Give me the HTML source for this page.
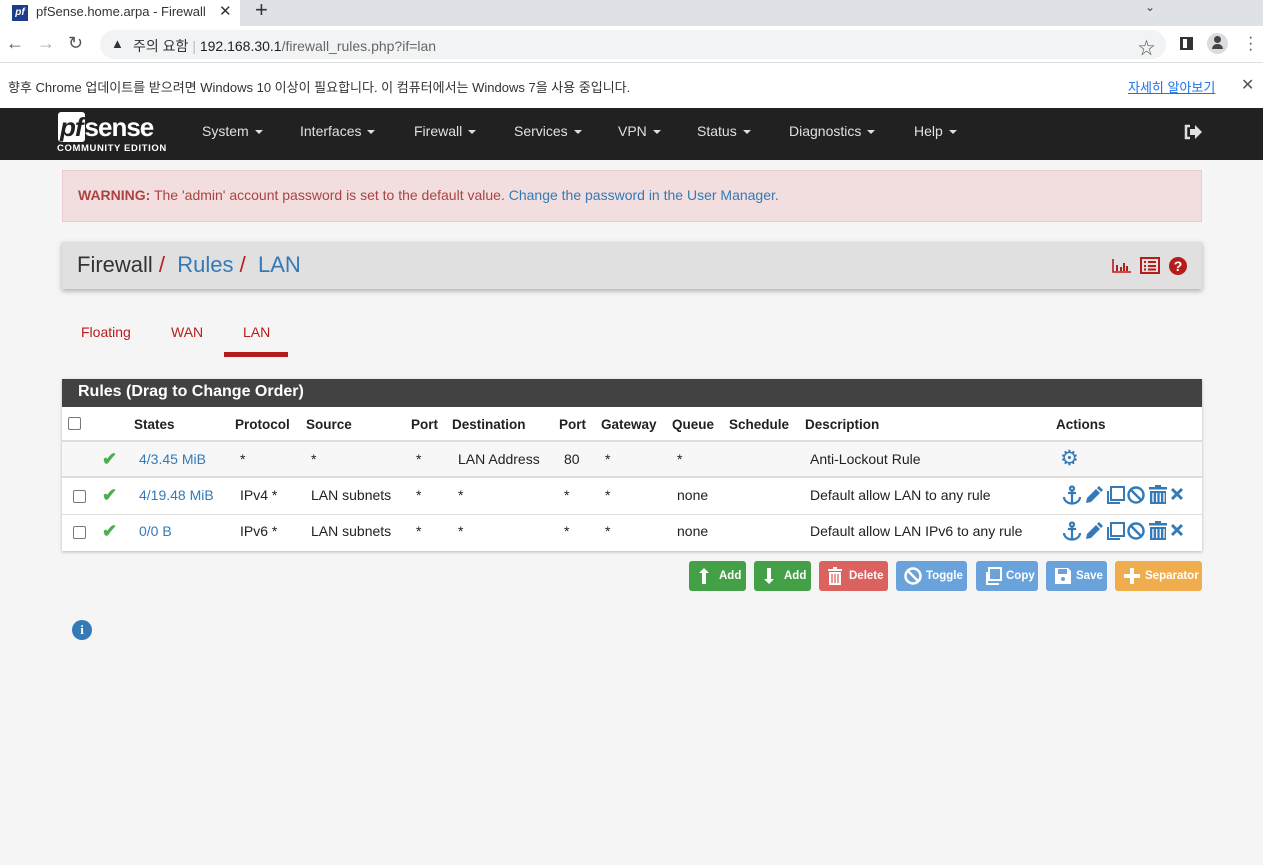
<!DOCTYPE html>
<html><head><meta charset="utf-8">
<style>
*{box-sizing:border-box;margin:0;padding:0}
body{width:1263px;height:865px;overflow:hidden;background:#f5f5f5;font-family:"Liberation Sans","Noto Sans CJK KR",sans-serif;position:relative;color:#212121}
.a{position:absolute}
.tabbar{left:0;top:0;width:1263px;height:26px;background:#dee1e6}
.tab{left:0;top:0;width:240px;height:26px;background:#fff;font-size:13px;color:#333}
.addr{left:0;top:26px;width:1263px;height:37px;background:#fff;border-bottom:1px solid #ddd}
.omni{left:100px;top:30px;width:1066px;height:29px;background:#f1f3f4;border-radius:15px}
.info{left:0;top:63px;width:1263px;height:45px;background:#fff;font-size:13px;color:#333}
.nav{left:0;top:108px;width:1263px;height:52px;background:#212121;color:#e0e0e0;font-size:14px}
.nav span.m{position:absolute;top:15px}
.car{display:inline-block;border-left:4px solid transparent;border-right:4px solid transparent;border-top:4px solid #e0e0e0;vertical-align:middle;margin-left:6px}
.warn{left:62px;top:170px;width:1140px;height:52px;background:#f2dede;border:1px solid #ebccd1;color:#a94442;font-size:14px;padding:16px 15px}
.crumb{left:62px;top:242px;width:1140px;height:47px;background:#e0e0e0;box-shadow:0 2px 5px rgba(0,0,0,.3);font-size:22px;padding:10px 15px;color:#333}
.blue{color:#337ab7}.red{color:#b71c1c}
.tabs{top:324px;font-size:14px;color:#b71c1c}
.panel{left:62px;top:379px;width:1140px;height:172px;background:#fff;box-shadow:0 1px 3px rgba(0,0,0,.25)}
.ph{left:0;top:0;width:1140px;height:28px;background:#424242;color:#fff;font-weight:bold;font-size:16px;padding:4px 16px}
.row{left:0;width:1140px;font-size:14px}
.row span{position:absolute}
.cb{position:absolute;width:13px;height:13px;border:1px solid #777;border-radius:2px;background:#fff}
.btn{position:absolute;top:561px;height:30px;border-radius:3px;color:#fff;font-size:11.5px;font-weight:bold;line-height:30px}
.btn svg{position:absolute;left:8px;top:6px}
.btn b{position:absolute;left:30px;top:0}
</style></head><body>
<div class="a tabbar"></div>
<div class="a tab"><div class="a" style="left:12px;top:5px;width:16px;height:16px;background:#1e3c8c;color:#fff;font-size:10px;font-weight:bold;font-style:italic;text-align:center;line-height:16px">pf</div><div class="a" style="left:36px;top:4px;white-space:nowrap;width:170px;overflow:hidden">pfSense.home.arpa - Firewall: Ru</div><div class="a" style="left:219px;top:2px;font-size:15px">✕</div></div>
<div class="a" style="left:255px;top:-3px;font-size:22px;color:#333">+</div>
<div class="a" style="left:1145px;top:0px;font-size:12px;color:#444">⌄</div>
<div class="a addr"></div>
<div class="a" style="left:6px;top:33px;font-size:18px;color:#555">←</div>
<div class="a" style="left:37px;top:33px;font-size:18px;color:#aaa">→</div>
<div class="a" style="left:68px;top:33px;font-size:18px;color:#555">↻</div>
<div class="a omni"></div>
<div class="a" style="left:111px;top:36px;font-size:13px;color:#333">▲</div>
<div class="a" style="left:133px;top:36px;font-size:14px;color:#333">주의 요함 <span style="color:#bbb">|</span> <span style="color:#202124">192.168.30.1</span><span style="color:#666">/firewall_rules.php?if=lan</span></div>
<div class="a" style="left:1138px;top:34px;font-size:17px;color:#555">☆</div>
<div class="a" style="left:1180px;top:37px;width:13px;height:13px;border:2px solid #333;border-left-width:3px;border-right-width:6px"></div>
<div class="a" style="left:1207px;top:33px;width:21px;height:21px;border-radius:50%;background:#dadce0"></div>
<div class="a" style="left:1212px;top:36px;width:11px;height:14px;"><div style="width:7px;height:7px;border-radius:50%;background:#444;margin:0 auto"></div><div style="width:11px;height:5px;border-radius:5px 5px 0 0;background:#444;margin-top:1px"></div></div>
<div class="a" style="left:1248px;top:35px;font-size:16px;color:#444;line-height:6px">·<br>·<br>·</div>
<div class="a info"><div class="a" style="left:8px;top:14px">향후 Chrome 업데이트를 받으려면 Windows 10 이상이 필요합니다. 이 컴퓨터에서는 Windows 7을 사용 중입니다.</div>
<div class="a" style="left:1128px;top:14px;color:#1a73e8;text-decoration:underline">자세히 알아보기</div>
<div class="a" style="left:1241px;top:12px;font-size:16px;color:#555">✕</div></div>
<div class="a nav">
<div class="a" style="left:58px;top:6px;width:104px;height:26px;font-size:26px;font-weight:bold;color:#fff;line-height:26px;letter-spacing:-1px"><span style="font-style:italic;background:#fff;color:#212121;padding:0 2px;border-radius:3px">pf</span>sense</div>
<div class="a" style="left:57px;top:35px;font-size:9.5px;font-weight:bold;color:#fff;letter-spacing:.6px">COMMUNITY EDITION</div>
<span class="m" style="left:202px">System<i class="car"></i></span>
<span class="m" style="left:300px">Interfaces<i class="car"></i></span>
<span class="m" style="left:414px">Firewall<i class="car"></i></span>
<span class="m" style="left:514px">Services<i class="car"></i></span>
<span class="m" style="left:618px">VPN<i class="car"></i></span>
<span class="m" style="left:697px">Status<i class="car"></i></span>
<span class="m" style="left:789px">Diagnostics<i class="car"></i></span>
<span class="m" style="left:914px">Help<i class="car"></i></span>
<svg class="a" style="left:1183px;top:16px" width="20" height="16" viewBox="0 0 20 16"><path d="M7 2H3v12h4" fill="none" stroke="#e0e0e0" stroke-width="2.5"/><path d="M7 5h5V1l7 7-7 7v-4H7z" fill="#e0e0e0"/></svg>
</div>
<div class="a warn"><b>WARNING:</b> The 'admin' account password is set to the default value. <span class="blue">Change the password in the User Manager.</span></div>
<div class="a crumb">Firewall <span class="red">/</span>&nbsp; <span class="blue">Rules</span> <span class="red">/</span>&nbsp; <span class="blue">LAN</span></div>
<svg class="a" style="left:1112px;top:258px" width="20" height="16"><path d="M1 1v13h18" stroke="#b71c1c" stroke-width="1.6" fill="none"/><path d="M5 7v6M9 9v4M12 5v8M15 8v5" stroke="#b71c1c" stroke-width="2"/></svg>
<svg class="a" style="left:1140px;top:257px" width="20" height="17"><rect x="1" y="1" width="18" height="15" fill="none" stroke="#b71c1c" stroke-width="2"/><path d="M4 5h2M8 5h8M4 9h2M8 9h8M4 12.5h2M8 12.5h8" stroke="#b71c1c" stroke-width="2"/></svg>
<div class="a" style="left:1169px;top:257px;width:18px;height:18px;border-radius:50%;background:#b71c1c;color:#fff;font-weight:bold;font-size:14px;text-align:center;line-height:18px">?</div>
<div class="a tabs" style="left:81px">Floating</div>
<div class="a tabs" style="left:171px">WAN</div>
<div class="a tabs" style="left:243px">LAN</div>
<div class="a" style="left:224px;top:352px;width:64px;height:5px;background:#b71c1c"></div>
<svg width="0" height="0" style="position:absolute"><defs>
<g id="acts" fill="#337ab7" stroke="#337ab7">
<g fill="none" stroke-width="2.2"><circle cx="10" cy="3.5" r="2"/><path d="M10 5.5v13M6 8h8M2 12c0 4 4 6.5 8 6.5s8-2.5 8-6.5"/></g>
<path d="M24 18l1-5 9-9 4 4-9 9z M35 3l2-2 4 4-2 2z" stroke="none"/>
<g fill="none" stroke-width="2"><rect x="49" y="2" width="13" height="13"/><path d="M46 6v12h12"/></g>
<g fill="none" stroke-width="2.4"><circle cx="74" cy="10" r="7.5"/><path d="M69 5l10 10"/></g>
<g stroke="none"><rect x="87" y="2" width="18" height="2.5"/><rect x="93" y="0" width="6" height="2"/><path d="M88 6h16v13H88z"/></g>
<path d="M91 8v9M94.7 8v9M98.3 8v9M102 8v9" stroke="#fff" stroke-width="1.3"/>
<path d="M110 4l10 10M120 4l-10 10" fill="none" stroke-width="3"/>
</g></defs></svg>
<div class="a panel">
<div class="a ph">Rules (Drag to Change Order)</div>
<div class="a row" style="top:28px;height:35px;font-weight:bold;font-size:13.5px;border-bottom:2px solid #ddd">
<i class="cb" style="left:6px;top:10px"></i>
<span style="left:72px;top:10px">States</span><span style="left:173px;top:10px">Protocol</span><span style="left:244px;top:10px">Source</span><span style="left:349px;top:10px">Port</span><span style="left:390px;top:10px">Destination</span><span style="left:497px;top:10px">Port</span><span style="left:539px;top:10px">Gateway</span><span style="left:610px;top:10px">Queue</span><span style="left:667px;top:10px">Schedule</span><span style="left:743px;top:10px">Description</span><span style="left:994px;top:10px">Actions</span>
</div>
<div class="a row" style="top:63px;height:36px;background:#f7f7f7;border-bottom:2px solid #ddd">
<span style="left:40px;top:7px;color:#4cae4c;font-size:18px;font-weight:bold">✔</span>
<span class="blue" style="left:77px;top:9px">4/3.45 MiB</span><span style="left:178px;top:9px">*</span><span style="left:249px;top:9px">*</span><span style="left:354px;top:9px">*</span><span style="left:396px;top:9px">LAN Address</span><span style="left:502px;top:9px">80</span><span style="left:543px;top:9px">*</span><span style="left:615px;top:9px">*</span><span style="left:748px;top:9px">Anti-Lockout Rule</span>
<span style="left:998px;top:4px;color:#337ab7;font-size:21px">⚙</span>
</div>
<div class="a row" style="top:100px;height:36px;border-bottom:1px solid #ddd">
<i class="cb" style="left:11px;top:11px"></i>
<span style="left:40px;top:6px;color:#4cae4c;font-size:18px;font-weight:bold">✔</span>
<span class="blue" style="left:77px;top:8px">4/19.48 MiB</span><span style="left:178px;top:8px">IPv4 *</span><span style="left:249px;top:8px">LAN subnets</span><span style="left:354px;top:8px">*</span><span style="left:396px;top:8px">*</span><span style="left:502px;top:8px">*</span><span style="left:543px;top:8px">*</span><span style="left:615px;top:8px">none</span><span style="left:748px;top:8px">Default allow LAN to any rule</span>
<svg style="position:absolute;left:1000px;top:6px" width="124" height="21"><use href="#acts"/></svg>
</div>
<div class="a row" style="top:136px;height:36px">
<i class="cb" style="left:11px;top:11px"></i>
<span style="left:40px;top:6px;color:#4cae4c;font-size:18px;font-weight:bold">✔</span>
<span class="blue" style="left:77px;top:8px">0/0 B</span><span style="left:178px;top:8px">IPv6 *</span><span style="left:249px;top:8px">LAN subnets</span><span style="left:354px;top:8px">*</span><span style="left:396px;top:8px">*</span><span style="left:502px;top:8px">*</span><span style="left:543px;top:8px">*</span><span style="left:615px;top:8px">none</span><span style="left:748px;top:8px">Default allow LAN IPv6 to any rule</span>
<svg style="position:absolute;left:1000px;top:6px" width="124" height="21"><use href="#acts"/></svg>
</div>
</div>
<div class="btn" style="left:689px;width:57px;background:#43a047"><svg width="14" height="18"><path d="M7 1l-5 5h3v11h4V6h3z" fill="#fff"/></svg><b>Add</b></div>
<div class="btn" style="left:754px;width:57px;background:#43a047"><svg width="14" height="18"><path d="M7 17l-5-5h3V1h4v11h3z" fill="#fff"/></svg><b>Add</b></div>
<div class="btn" style="left:819px;width:69px;background:#d9534f;opacity:.9"><svg width="16" height="18"><rect x="1" y="2" width="14" height="2" fill="#fff"/><rect x="6" y="0" width="4" height="2" fill="#fff"/><path d="M2 5h12v13H2z" fill="#fff"/><path d="M5 7v9M8 7v9M11 7v9" stroke="#d9534f" stroke-width="1.3"/></svg><b>Delete</b></div>
<div class="btn" style="left:896px;width:71px;background:#6aa3dc"><svg width="18" height="18"><circle cx="9" cy="9" r="7.5" fill="none" stroke="#fff" stroke-width="2.5"/><path d="M4 4l10 10" stroke="#fff" stroke-width="2.5"/></svg><b>Toggle</b></div>
<div class="btn" style="left:976px;width:62px;background:#6aa3dc"><svg width="18" height="18"><rect x="5" y="1" width="12" height="12" fill="none" stroke="#fff" stroke-width="2"/><path d="M3 5v12h12" fill="none" stroke="#fff" stroke-width="2"/></svg><b>Copy</b></div>
<div class="btn" style="left:1046px;width:61px;background:#6aa3dc"><svg width="18" height="18"><path d="M1 1h13l3 3v13H1z" fill="#fff"/><rect x="4" y="2" width="9" height="5" fill="#6aa3dc"/><circle cx="9" cy="12" r="2" fill="#6aa3dc"/></svg><b>Save</b></div>
<div class="btn" style="left:1115px;width:87px;background:#f0ad4e"><svg width="18" height="18"><path d="M9 1v16M1 9h16" stroke="#fff" stroke-width="4"/></svg><b>Separator</b></div>
<div class="a" style="left:72px;top:620px;width:20px;height:20px;border-radius:50%;background:#337ab7;color:#fff;font-weight:bold;font-size:13px;text-align:center;line-height:20px;font-family:'Liberation Serif',serif">i</div>
</body></html>
